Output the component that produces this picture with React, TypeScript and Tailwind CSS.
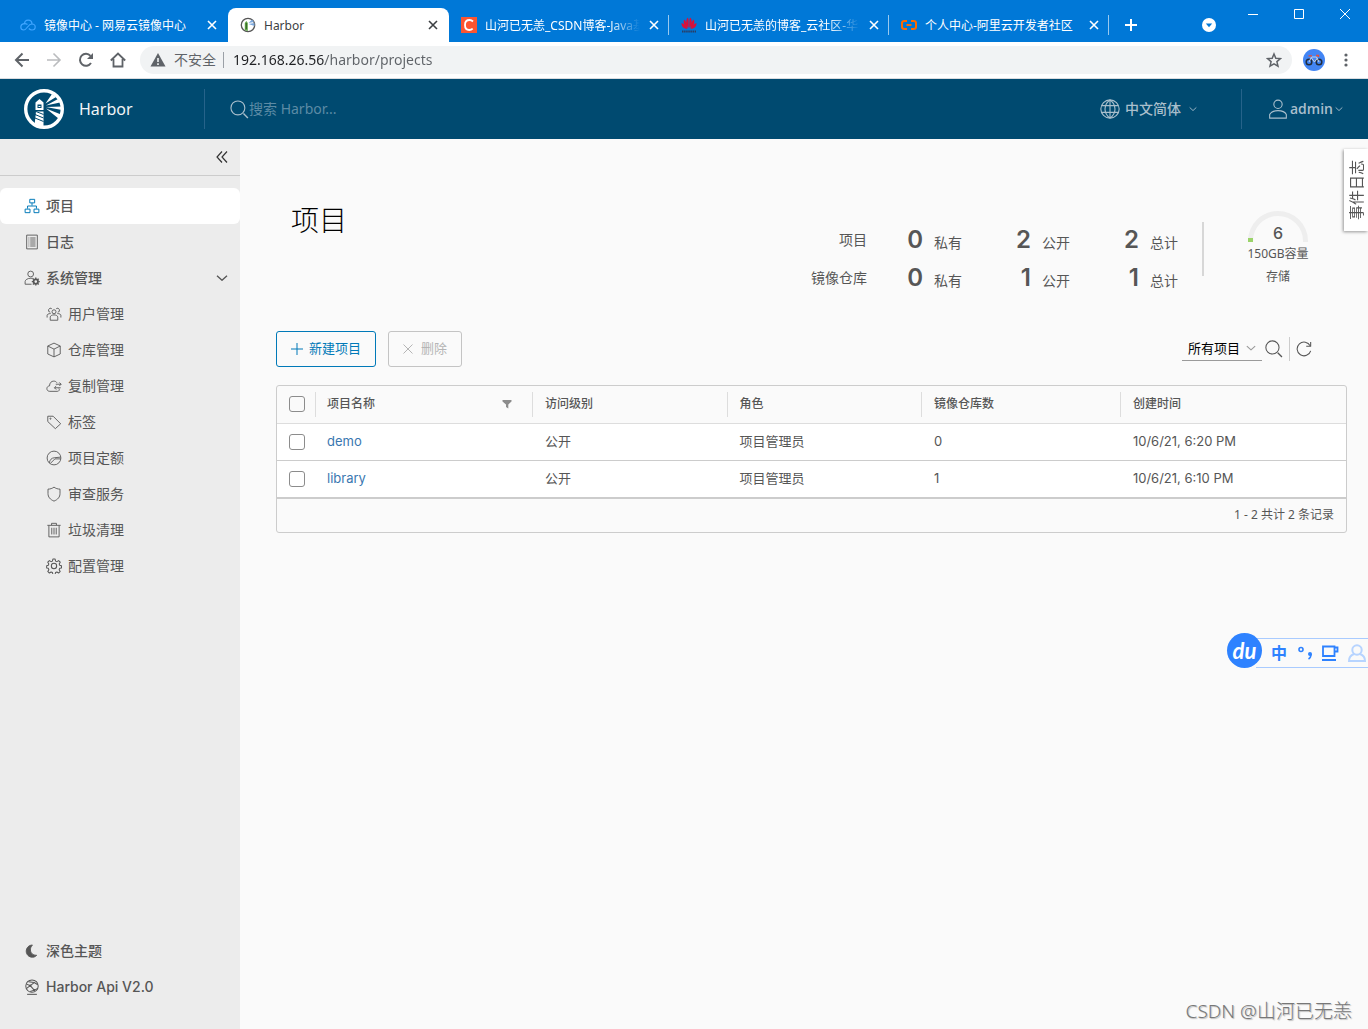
import { useState, type ReactNode } from 'react';

type IconProps = { className?: string };

const Svg = ({
  className = 'size-4',
  width = 2,
  children
}: {
  className?: string;
  width?: number;
  children: ReactNode;
}) => (
  <svg
    className={`shrink-0 ${className}`}
    viewBox="0 0 36 36"
    fill="none"
    stroke="currentColor"
    strokeWidth={width}
    strokeLinejoin="round"
    aria-hidden="true"
  >
    {children}
  </svg>
);

const OrgIcon = () => (
  <Svg width={2.2}>
    <rect x="13" y="3" width="11" height="8" />
    <rect x="2.5" y="25" width="11" height="8" />
    <rect x="22.5" y="25" width="11" height="8" />
    <path d="M18 11v6M8 24v-6h20v6" />
  </Svg>
);

const LogIcon = () => (
  <Svg>
    <path d="M6 2.5h24v31H6z" />
    <path d="M10 9h2M14 9h12M10 13.500h2M14 13.500h12M10 18h2M14 18h12M10 22.500h2M14 22.500h12M10 27h2M14 27h12" />
  </Svg>
);

const AdminIcon = () => (
  <Svg>
    <circle cx="15" cy="9" r="6.5" />
    <path d="M17 32H2.500v-6c0-4 6-7.500 13-7.500 2 0 4 .3 5.500.8" />
    <circle cx="26.500" cy="26" r="5" strokeWidth="4" />
    <path
      strokeWidth="3"
      d="M26.500 17v3M26.500 32v3M17.500 26h3M32.500 26h3M20 19.500l2 2M31 30.500l2 2M33 19.500l-2 2M22 30.500l-2 2"
    />
  </Svg>
);

const UsersIcon = () => (
  <Svg>
    <circle cx="18" cy="13" r="4.500" />
    <path d="M9.500 32v-7c0-3 4-5 8.500-5s8.500 2 8.500 5v7z" />
    <path d="M13 6A4.500 4.500 0 1 0 9.500 14M23 6A4.500 4.500 0 1 1 26.500 14M2.500 26v-5c0-2 3-4 8-4M33.500 26v-5c0-2-3-4-8-4" />
  </Svg>
);

const BoxIcon = () => (
  <Svg>
    <path d="M18 2.500l14 6.500v18L18 33.500 4 27V9zM4 9l14 7 14-7M18 16v17.500" />
  </Svg>
);

const ReplicationIcon = () => (
  <Svg>
    <path d="M29 23.500a4 4 0 0 1-3.500 6.500H8.500C4.500 30 2 27.500 2 24c0-3.500 2.500-6 6-6.300C8 11 12 7 17.500 7c3 0 5.500 1.200 7 3.500" />
    <path d="M22 14h12M30 10l4 4-4 4M33 22H19M23 18l-4 4 4 4" />
  </Svg>
);

const TagIcon = () => (
  <Svg>
    <path d="M4 5h12l17 17-12 11L4 17z" />
    <circle cx="10" cy="10.500" r="1.300" />
  </Svg>
);

const QuotaIcon = () => (
  <Svg>
    <circle cx="18" cy="18" r="15.500" />
    <path d="M7.500 29c1-7 5-11 11-11.500L33 16M33 20H20L10 30" />
  </Svg>
);

const ShieldIcon = () => (
  <Svg>
    <path d="M18 2.500c4 3 8.500 4.500 13.500 4.500v10c0 8-5 13.500-13.500 17C9.500 30.500 4.500 25 4.500 17V7C9.500 7 14 5.500 18 2.500z" />
  </Svg>
);

const TrashIcon = () => (
  <Svg>
    <path d="M3 7.500h30M6.500 8v25.500h23V8M12.500 7V3h11v4M13 13v15M18 13v15M23 13v15" />
  </Svg>
);

const GearIcon = () => (
  <Svg width={2.3}>
    <circle cx="18" cy="18" r="6" />
    <path d="M15.500 2.500h5l1 4.500 3 1.200 3.900-2.400 3.600 3.600-2.400 3.900 1.200 3 4 1v5l-4 1-1.200 3 2.400 3.900-3.600 3.600-3.900-2.400-3 1.200-1 4.400h-5l-1-4.400-3-1.200-3.900 2.400L4 30.200l2.400-3.900-1.200-3-3.700-1v-5l3.700-1 1.200-3L4 9.400l3.600-3.600 3.900 2.400 3-1.200z" />
  </Svg>
);

const MoonIcon = () => (
  <Svg>
    <path fill="currentColor" d="M19 4.500C11 4.500 5 11 5 18.500S11 32 19 32c4 0 7-1.500 9.500-4.500C20 28 14.500 22.500 14.500 15.500c0-4.500 1.500-8 4.500-11z" />
  </Svg>
);

const ApiIcon = () => (
  <Svg width={2.3}>
    <circle cx="18" cy="16" r="14" />
    <path d="M7 34.500h22" />
    <path d="M5 11l9 4 9-7 8 5M14 15l9 10 8-4M6 21l8-6M10 6l13 2M14 28l9-3" />
    <circle cx="14" cy="15" r="1.500" fill="currentColor" />
    <circle cx="23" cy="25" r="1.500" fill="currentColor" />
  </Svg>
);

const SearchIcon = ({ className }: IconProps) => (
  <Svg className={className}>
    <circle cx="16" cy="16" r="12.500" />
    <path d="M26 26l8 8" strokeWidth="2.500" />
  </Svg>
);

const GlobeIcon = () => (
  <Svg className="size-5">
    <circle cx="18" cy="18" r="16.500" />
    <path d="M18 1.500v33M3 12h30M3 24h30M18 1.500c-12 9-12 24 0 33M18 1.500c12 9 12 24 0 33" />
  </Svg>
);

const PersonIcon = () => (
  <Svg className="size-5">
    <circle cx="18" cy="9.500" r="7.500" />
    <path d="M3 34.500h30V28c-2-4-8-7-15-7S5 24 3 28z" />
  </Svg>
);

const Chevron = ({ className }: IconProps) => (
  <Svg className={className} width={4}>
    <path d="M3 11l15 14 15-14" />
  </Svg>
);

const CloseIcon = ({ className }: IconProps) => (
  <svg className={className} viewBox="0 0 10 10" stroke="currentColor" strokeWidth="1.600" aria-hidden="true">
    <path d="M1 1l8 8M9 1L1 9" />
  </svg>
);

const HarborLogo = () => (
  <svg className="size-10" viewBox="0 0 40 40" fill="#fff" aria-hidden="true">
    <circle cx="20" cy="20" r="18.300" fill="none" stroke="#fff" strokeWidth="3.400" />
    <path d="M15.500 10l4 3.500v7.500h-8v-7.500z" />
    <path d="M13.500 15.500h4v3.500h-4z" fill="#004a70" />
    <path d="M14.500 17h2v1h-2z" />
    <path d="M12 22.500h7.500V39l-9-2.500z" />
    <path d="M11 25.500l8.500 3.500M11 29l8.500 3.500M12 22.500l7.500 3" stroke="#004a70" strokeWidth="1" />
    <path d="M21.500 14.500L28 5l4 3zM22 16.500L34 10l2 3.500zM22 18l16-.500v3.500zM22 19.500l15 6-2.500 4z" />
  </svg>
);

const HarborFavicon = () => (
  <svg className="size-4 shrink-0" viewBox="0 0 16 16" aria-hidden="true">
    <circle cx="8" cy="8" r="6.700" fill="#fff" stroke="#555" strokeWidth="1.300" />
    <path d="M4.800 6L6.300 4 7.800 6v8l-3-.800z" fill="#60a844" />
    <path d="M6.300 6v6" stroke="#35592a" strokeWidth="1" />
    <path d="M8.500 6L12 2.500 14 5zM8.500 7l6-1v3z" fill="#7ba7dc" />
  </svg>
);

const CloudFavicon = () => (
  <svg className="size-4 shrink-0" viewBox="0 0 16 16" fill="none" stroke="#3fa5ff" strokeWidth="1.200" aria-hidden="true">
    <path d="M4.500 7.200C4.500 4.800 6 3.200 8.200 3.200s3.800 1.700 3.800 4" />
    <path d="M7.500 7.500C6.500 6.800 5.500 6.500 4 6.700 2 7 .8 8.300.8 10s1.200 3 3 3c3.200 0 4-6 8-6 2 0 3.400 1.300 3.400 3s-1.400 3-3.200 3c-1.300 0-2.300-.500-3.200-1.500" />
  </svg>
);

const CsdnFavicon = () => (
  <svg className="size-4 shrink-0" viewBox="0 0 16 16" fill="none" aria-hidden="true">
    <path d="M0 0h16v16H0z" fill="#fc5531" />
    <path d="M12 4.500c-1-1-2.200-1.500-3.500-1.500C5.500 3 4 5.200 4 8s1.300 5 4.200 5c1.300 0 2.500-.4 3.500-1.300" stroke="#fff" strokeWidth="1.800" />
  </svg>
);

const HuaweiFavicon = () => (
  <svg className="size-4 shrink-0" viewBox="0 0 16 16" fill="#d8103a" aria-hidden="true">
    <path d="M7.700 11C5 7 4.500 3 6.500.800c1 0 1.300 2 1.200 10.200zM8.300 11c2.700-4 3.200-8 1.200-10.200-1 0-1.300 2-1.200 10.200zM7 11.300C2.500 8 2 5 3.200 2.500 5 3.500 6 7 7 11.300zM9 11.300c4.500-3.300 5-6.300 3.800-8.800C11 3.500 10 7 9 11.300zM6.500 12C2 11.500.3 9 .500 6 3 6.500 5 9 6.500 12zM9.500 12c4.500-.5 6.200-3 6-6-2.500.500-4.500 3-6 6z" />
    <path d="M1 14.500h14" stroke="#2b3d63" strokeWidth="2" strokeDasharray="1.500 .6" />
  </svg>
);

const AliyunFavicon = () => (
  <svg className="size-4 shrink-0" viewBox="0 0 16 16" fill="none" stroke="#ff6a00" strokeWidth="2" aria-hidden="true">
    <path d="M6 4H3.500C2 4 1 5 1 6v4c0 1 1 2 2.500 2H6M10 4h2.500C14 4 15 5 15 6v4c0 1-1 2-2.500 2H10M5.500 8h5" />
  </svg>
);

const tabs = [
  { title: '镜像中心 - 网易云镜像中心', icon: <CloudFavicon />, active: false },
  { title: 'Harbor', icon: <HarborFavicon />, active: true },
  { title: '山河已无恙_CSDN博客-Java基', icon: <CsdnFavicon />, active: false },
  { title: '山河已无恙的博客_云社区-华', icon: <HuaweiFavicon />, active: false },
  { title: '个人中心-阿里云开发者社区', icon: <AliyunFavicon />, active: false }
];

const menu = [
  { label: '用户管理', icon: <UsersIcon /> },
  { label: '仓库管理', icon: <BoxIcon /> },
  { label: '复制管理', icon: <ReplicationIcon /> },
  { label: '标签', icon: <TagIcon /> },
  { label: '项目定额', icon: <QuotaIcon /> },
  { label: '审查服务', icon: <ShieldIcon /> },
  { label: '垃圾清理', icon: <TrashIcon /> },
  { label: '配置管理', icon: <GearIcon /> }
];

const stats = [
  { label: '项目', values: [0, 2, 2] },
  { label: '镜像仓库', values: [0, 1, 1] }
];
const statNames = ['私有', '公开', '总计'];

const projects = [
  { name: 'demo', access: '公开', role: '项目管理员', repos: 0, created: '10/6/21, 6:20 PM' },
  { name: 'library', access: '公开', role: '项目管理员', repos: 1, created: '10/6/21, 6:10 PM' }
];

const TabStrip = () => (
  <div className="flex h-[42px] bg-[#0078d7] pt-2 text-xs text-white">
    <div className="flex min-w-0 pl-2">
      {tabs.map((tab, i) => (
        <div
          key={tab.title}
          className={`flex min-w-0 items-center gap-2 pr-2.5 pl-3 ${
            tab.active ? 'w-[221px] rounded-t-lg bg-white text-[#3c4043]' : 'w-[220px]'
          }`}
        >
          {tab.icon}
          <span
            className={`min-w-0 flex-1 overflow-hidden pt-0.5 whitespace-nowrap ${
              i === 2 || i === 3 ? '[mask-image:linear-gradient(to_right,#000_80%,transparent)]' : ''
            }`}
          >
            {tab.title}
          </span>
          <button type="button" aria-label="关闭标签页" className="flex size-3 items-center justify-center">
            <CloseIcon className="size-2.5" />
          </button>
          {i > 1 && <span className="-mr-2.5 h-5 w-px bg-white/60" />}
        </div>
      ))}
    </div>
    <button type="button" aria-label="新标签页" className="ml-4 flex items-center">
      <svg className="size-3" viewBox="0 0 12 12" stroke="currentColor" strokeWidth="2">
        <path d="M6 0v12M0 6h12" />
      </svg>
    </button>
    <div className="ml-auto flex">
      <button type="button" aria-label="搜索标签页" className="flex w-[46px] items-center">
        <svg className="size-3.5" viewBox="0 0 14 14">
          <circle cx="7" cy="7" r="7" fill="#fff" />
          <path d="M3.800 5.500h6.400L7 9.300z" fill="#0078d7" />
        </svg>
      </button>
      <div className="-mt-2 flex h-7">
        <button type="button" aria-label="最小化" className="flex w-[46px] items-center">
          <svg className="size-2.5" viewBox="0 0 10 10" stroke="currentColor"><path d="M0 5.500h10" /></svg>
        </button>
        <button type="button" aria-label="最大化" className="flex w-[46px] items-center">
          <svg className="size-2.5" viewBox="0 0 10 10" fill="none" stroke="currentColor"><path d="M.5.500h9v9h-9z" /></svg>
        </button>
        <button type="button" aria-label="关闭" className="flex w-7 items-center">
          <svg className="size-2.5" viewBox="0 0 10 10" stroke="currentColor"><path d="M0 0l10 10M10 0L0 10" /></svg>
        </button>
      </div>
    </div>
  </div>
);

const Toolbar = () => (
  <div className="flex h-[37px] items-center border-b border-[#dadce0] bg-white px-3.5 text-[#5f6368]">
    <div className="flex gap-4">
      <button type="button" aria-label="后退">
        <svg className="size-4" viewBox="0 0 16 16" fill="none" stroke="currentColor" strokeWidth="2"><path d="M15 8H2M8.500 1.500L2 8l6.500 6.500" /></svg>
      </button>
      <button type="button" aria-label="前进" className="text-[#babcbe]">
        <svg className="size-4" viewBox="0 0 16 16" fill="none" stroke="currentColor" strokeWidth="1.600"><path d="M1 8h13M7.500 1.500L14 8l-6.500 6.500" /></svg>
      </button>
      <button type="button" aria-label="重新加载">
        <svg className="size-4" viewBox="0 0 16 16" fill="none" stroke="currentColor" strokeWidth="2">
          <path d="M13 11a6 6 0 1 1-.500-7.200" />
          <path d="M15 1v6H9z" fill="currentColor" stroke="none" />
        </svg>
      </button>
      <button type="button" aria-label="主页">
        <svg className="size-4" viewBox="0 0 16 16" fill="none" stroke="currentColor" strokeWidth="1.800"><path d="M.8 8.500L8 1.500l7.200 7M3.500 7v7.500h9V7" /></svg>
      </button>
    </div>
    <div className="ml-3.5 flex h-7 flex-1 items-center rounded-full bg-[#f1f3f4] px-2.5 text-sm">
      <svg className="size-4 shrink-0" viewBox="0 0 16 16" fill="currentColor" aria-hidden="true">
        <path d="M8 1l7.500 13.500H.5z" />
        <path d="M8 6v4M8 11.200v1.800" stroke="#f1f3f4" strokeWidth="1.600" />
      </svg>
      <span className="mr-[7px] ml-2 whitespace-nowrap">不安全</span>
      <span className="mr-[9px] h-4 w-px bg-[#9aa0a6]" />
      <input
        aria-label="地址"
        defaultValue="192.168.26.56/harbor/projects"
        className="min-w-0 flex-1 bg-[linear-gradient(to_right,#202124_92px,#5f6368_92px)] bg-clip-text text-transparent outline-none"
      />
      <button type="button" aria-label="收藏">
        <svg className="size-4" viewBox="0 0 16 16" fill="none" stroke="currentColor" strokeWidth="1.500">
          <path d="M8 2l1.800 4.200 4.700.4-3.600 3 1.100 4.600L8 11.800l-4 2.400 1.100-4.600-3.600-3 4.700-.4z" />
        </svg>
      </button>
    </div>
    <button type="button" aria-label="用户" className="ml-[11px]">
      <svg className="size-[22px]" viewBox="0 0 22 22" fill="none">
        <circle cx="11" cy="11" r="11" fill="#4285f4" />
        <circle cx="6" cy="13" r="2.800" stroke="#222c3c" strokeWidth="1.500" />
        <circle cx="16" cy="13" r="2.800" stroke="#222c3c" strokeWidth="1.500" />
        <path d="M6 13l2.500-5h5L16 13M8.500 9l3 4 3-4" stroke="#c8d4e8" strokeWidth="1" />
        <path d="M5.500 6.800h3.500M13 6.500h2.500v1.500" stroke="#e94f37" strokeWidth="1.300" />
      </svg>
    </button>
    <button type="button" aria-label="更多" className="ml-[13px] flex w-4 justify-center">
      <svg className="h-3.5 w-1" viewBox="0 0 4 14" fill="currentColor">
        <circle cx="2" cy="2" r="1.600" />
        <circle cx="2" cy="7" r="1.600" />
        <circle cx="2" cy="12" r="1.600" />
      </svg>
    </button>
  </div>
);

const Header = () => (
  <header className="flex h-[60px] items-center bg-[#004a70] text-[#a9bfcc]">
    <a href="#" className="flex w-[204px] items-center gap-[15px] pl-6 text-base text-[#f2f5f7]">
      <HarborLogo />
      Harbor
    </a>
    <div className="h-10 w-px bg-[#26638a]" />
    <label className="ml-6 flex flex-1 items-center">
      <SearchIcon className="size-5" />
      <input
        type="search"
        aria-label="搜索"
        placeholder="搜索 Harbor..."
        className="min-w-0 flex-1 bg-transparent text-sm outline-none placeholder:text-[#5c8ba5]"
      />
    </label>
    <button type="button" className="mr-11 flex items-center text-sm font-medium">
      <GlobeIcon />
      <span className="mr-2 ml-[5px]">中文简体</span>
      <Chevron className="size-2" />
    </button>
    <div className="h-10 w-px bg-[#26638a]" />
    <button type="button" className="mr-[25px] ml-[26px] flex items-center font-['Open_Sans'] text-sm font-semibold">
      <PersonIcon />
      <span className="mr-0.5 ml-0.5">admin</span>
      <Chevron className="size-2" />
    </button>
  </header>
);

const Sidebar = () => {
  const [open, setOpen] = useState(true);

  return (
    <aside className="flex w-60 shrink-0 flex-col bg-[#ececec] text-sm text-[#565656]">
      <div className="flex h-[37px] items-center justify-end border-b border-[#ccc] pr-3">
        <button type="button" aria-label="折叠" className="text-[#333]">
          <svg className="size-3" viewBox="0 0 12 12" fill="none" stroke="currentColor" strokeWidth="1.200">
            <path d="M6 .5L1 6l5 5.500M11 .5L6 6l5 5.500" />
          </svg>
        </button>
      </div>
      <nav className="flex flex-1 flex-col pt-3 pb-6">
        <a href="#" className="flex h-9 items-center gap-1.5 rounded-md bg-white pl-6 font-medium">
          <span className="text-[#0079b8]"><OrgIcon /></span>
          项目
        </a>
        <a href="#" className="flex h-9 items-center gap-1.5 pl-6 font-medium">
          <LogIcon />
          日志
        </a>
        <button
          type="button"
          aria-expanded={open}
          onClick={() => setOpen(!open)}
          className="flex h-9 items-center gap-1.5 pr-3 pl-6 font-medium"
        >
          <AdminIcon />
          系统管理
          <Chevron className="ml-auto size-3" />
        </button>
        {open &&
          menu.map((item) => (
            <a key={item.label} href="#" className="flex h-9 items-center gap-1.5 pl-[46px]">
              {item.icon}
              {item.label}
            </a>
          ))}
        <button type="button" className="mt-auto flex h-9 items-center gap-1.5 pl-6 font-medium">
          <MoonIcon />
          深色主题
        </button>
        <a href="#" className="flex h-9 items-center gap-1.5 pl-6 font-['Inter'] font-medium">
          <ApiIcon />
          Harbor Api V2.0
        </a>
      </nav>
    </aside>
  );
};

const Stats = () => (
  <div className="flex items-start">
    <div className="mt-[18px]">
      {stats.map((row) => (
        <div key={row.label} className="flex h-[38px] items-center">
          <span className="w-16 text-right text-sm">{row.label}</span>
          {row.values.map((value, i) => (
            <div key={statNames[i]} className="flex items-baseline">
              <span
                className={`text-right font-['Inter'] text-2xl leading-8 font-semibold ${i === 0 ? 'w-14' : 'w-[69px]'}`}
              >
                {value}
              </span>
              <span className="ml-[11px] text-sm">{statNames[i]}</span>
            </div>
          ))}
        </div>
      ))}
    </div>
    <div className="mt-[19px] ml-6 h-[54px] w-0.5 bg-[#d7d7d7]" />
    <div className="ml-[39px] flex w-[70px] flex-col items-center text-xs whitespace-nowrap">
      <div className="relative mt-2 h-[31px] w-[60px]">
        <svg viewBox="0 0 60 31" fill="none" strokeWidth="5" aria-hidden="true">
          <path d="M2.500 31v-1a27.500 27.500 0 0 1 55 0v1" stroke="#eee" />
          <path d="M2.500 31v-4" stroke="#9bd36a" />
        </svg>
        <span className="absolute inset-x-0 top-3 text-center font-['Inter'] text-base leading-5 font-medium">6</span>
      </div>
      <span className="mt-1 leading-4">150GB容量</span>
      <span className="mt-[7px] leading-4">存储</span>
    </div>
  </div>
);

const checkbox = 'block size-4 appearance-none rounded-[3px] border border-[#8c8c8c] checked:bg-[#0079b8]';

const ProjectTable = () => (
  <div className="mt-[18px] overflow-hidden rounded-[3px] border border-[#ccc]">
    <table className="w-full table-fixed text-left font-['Inter','Noto_Sans_CJK_SC',sans-serif] text-[13px]">
      <colgroup>
        <col className="w-[38px]" />
        <col className="w-[20.3%]" />
        <col className="w-[18.2%]" />
        <col className="w-[18.2%]" />
        <col className="w-[18.6%]" />
        <col />
      </colgroup>
      <thead>
        <tr className="h-[37px] border-b border-[#ddd] text-xs">
          <th className="pl-3">
            <input type="checkbox" aria-label="全选" className={checkbox} />
          </th>
          <th className="font-medium">
            <div className="flex h-[25px] items-center justify-between border-l border-[#ddd] pr-5 pl-[11px]">
              项目名称
              <button type="button" aria-label="筛选" className="text-[#8c8c8c]">
                <svg className="size-2.5" viewBox="0 0 10 10" fill="currentColor">
                  <path d="M.5 1h9v1.500L6.300 5.500V9.500L4 8V5.500L.5 2.500z" />
                </svg>
              </button>
            </div>
          </th>
          {['访问级别', '角色', '镜像仓库数', '创建时间'].map((title) => (
            <th key={title} className="font-medium">
              <div className="flex h-[25px] items-center border-l border-[#ddd] pl-3">{title}</div>
            </th>
          ))}
        </tr>
      </thead>
      <tbody className="bg-white">
        {projects.map((project) => (
          <tr key={project.name} className="h-[37px] border-b border-[#ccc]">
            <td className="pl-3">
              <input type="checkbox" aria-label={project.name} className={checkbox} />
            </td>
            <td className="pl-3">
              <a href="#" className="text-[#3a77b0]">{project.name}</a>
            </td>
            <td className="pl-[13px]">{project.access}</td>
            <td className="pl-[13px]">{project.role}</td>
            <td className="pl-[13px]">{project.repos}</td>
            <td className="pl-[13px]">{project.created}</td>
          </tr>
        ))}
      </tbody>
    </table>
    <div className="flex h-[34px] items-center justify-end border-t border-[#ccc] pr-3 text-xs">1 - 2 共计 2 条记录</div>
  </div>
);

const Projects = () => (
  <main className="min-w-0 flex-1 pt-16 pr-[21px] pl-9">
    <div className="flex justify-between pr-[34px]">
      <h1 className="pl-[15px] text-[28px] leading-[34px] font-light text-black">项目</h1>
      <Stats />
    </div>
    <div className="mt-[34px] flex items-end justify-between">
      <div className="flex gap-3 text-[13px]">
        <button type="button" className="flex h-9 items-center gap-1.5 rounded-[3px] border border-[#0079b8] px-3.5 text-[#0079b8]">
          <svg className="size-3" viewBox="0 0 12 12" stroke="currentColor"><path d="M6 0v12M0 6h12" /></svg>
          新建项目
        </button>
        <button type="button" disabled className="flex h-9 items-center gap-2 rounded-[3px] border border-[#c4c4c4] px-3.5 text-[#b5b5b5]">
          <svg className="size-2.5" viewBox="0 0 10 10" stroke="currentColor"><path d="M.5.500l9 9M9.500.500l-9 9" /></svg>
          删除
        </button>
      </div>
      <div className="mr-[35px] mb-1 flex items-center">
        <div className="relative mb-0.5">
          <select aria-label="项目筛选" className="h-6 w-20 appearance-none border-b border-[#9a9a9a] bg-transparent pl-1.5 text-[13px] text-black">
            <option>所有项目</option>
            <option>私有</option>
            <option>公开</option>
          </select>
          <Chevron className="pointer-events-none absolute top-2 right-1.5 size-2.5 text-[#9a9a9a]" />
        </div>
        <button type="button" aria-label="搜索" className="mr-1.5 ml-0.5">
          <SearchIcon className="size-[19px]" />
        </button>
        <span className="h-6 w-px bg-[#ccc]" />
        <button type="button" aria-label="刷新" className="ml-1.5">
          <Svg className="size-4" width={2.4}>
            <path d="M33 22a15.500 15.500 0 1 1-1-11" />
            <path d="M33 2v10H23" />
          </Svg>
        </button>
      </div>
    </div>
    <ProjectTable />
  </main>
);

const InputMethodBar = () => (
  <div className="absolute top-[633px] right-0 flex items-start text-[#2e82ff]">
    <div className="z-10 flex size-[35px] items-center justify-center rounded-full bg-[#2e82ff] font-['Lato'] text-[22px] leading-none font-bold text-white italic">
      du
    </div>
    <div className="mt-[5px] -ml-1.5 flex h-[30px] items-center border-y border-[#a9cbff] pr-0.5 pl-[15px]">
      <span className="w-[27px] text-base font-bold">中</span>
      <svg className="mr-[7px] size-4" viewBox="0 0 16 16" fill="none" stroke="currentColor" strokeWidth="1.600">
        <circle cx="3" cy="4.500" r="2" />
        <circle cx="12" cy="9" r="2" fill="currentColor" stroke="none" />
        <path d="M13 9c0 2.500-.8 4-2.500 5" />
      </svg>
      <svg className="mr-2 size-[18px]" viewBox="0 0 18 18" fill="none" stroke="currentColor" strokeWidth="1.800">
        <path d="M2 2.500h11.500v9.500H2zM13.500 3.500h3v4h-3M1 16h14" />
      </svg>
      <svg className="h-[18px] w-[19px] text-[#b7d4ff]" viewBox="0 0 19 18" fill="none" stroke="currentColor" strokeWidth="2">
        <circle cx="10" cy="6" r="4.700" />
        <path d="M7 10c-3 1-5 3-5 7h16c0-4-2-6-5-7" />
      </svg>
    </div>
  </div>
);

export default function App() {
  return (
    <div className="relative flex min-h-screen flex-col overflow-hidden bg-[#fafafa] font-['Noto_Sans','Noto_Sans_CJK_SC',sans-serif] text-[#565656]">
      <TabStrip />
      <Toolbar />
      <Header />
      <div className="flex flex-1">
        <Sidebar />
        <Projects />
      </div>
      <button
        type="button"
        className="absolute top-[149px] right-0 flex h-[82px] w-6 items-center justify-center bg-white text-[15px] shadow-[-1px_1px_3px_rgba(0,0,0,0.4)]"
      >
        <span className="rotate-180 [text-orientation:sideways] [writing-mode:vertical-rl]">事件日志</span>
      </button>
      <InputMethodBar />
      <div className="absolute right-4 bottom-1.5 text-[19px] leading-6 font-light text-[#777] [text-shadow:1px_1px_1px_#bbb]">
        CSDN @山河已无恙
      </div>
    </div>
  );
}
